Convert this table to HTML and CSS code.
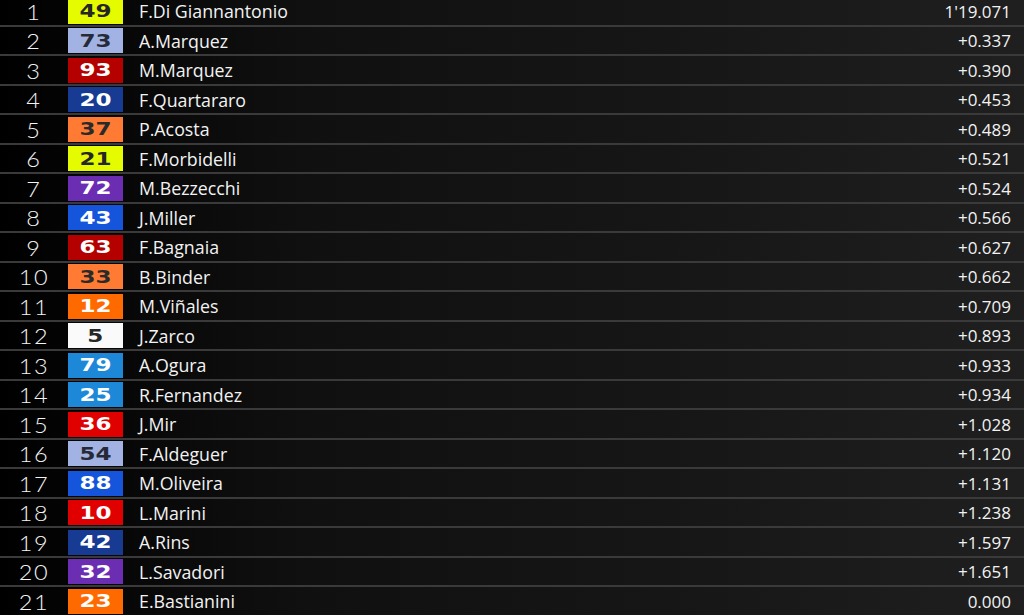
FILE: index.html
```html
<!DOCTYPE html>
<html lang="en">
<head>
<meta charset="utf-8">
<title>Classification</title>
<link rel="stylesheet" href="styles.css">
</head>
<body>
<div class="board">
  <div class="row"><span class="pos">1</span><span class="num c-lime"><b>49</b></span><span class="name">F.Di Giannantonio</span><span class="time">1'19.071</span></div>
  <div class="row"><span class="pos">2</span><span class="num c-lav"><b>73</b></span><span class="name">A.Marquez</span><span class="time">+0.337</span></div>
  <div class="row"><span class="pos">3</span><span class="num c-dred"><b>93</b></span><span class="name">M.Marquez</span><span class="time">+0.390</span></div>
  <div class="row"><span class="pos">4</span><span class="num c-navy"><b>20</b></span><span class="name">F.Quartararo</span><span class="time">+0.453</span></div>
  <div class="row"><span class="pos">5</span><span class="num c-orange"><b>37</b></span><span class="name">P.Acosta</span><span class="time">+0.489</span></div>
  <div class="row"><span class="pos">6</span><span class="num c-lime"><b>21</b></span><span class="name">F.Morbidelli</span><span class="time">+0.521</span></div>
  <div class="row"><span class="pos">7</span><span class="num c-purple"><b>72</b></span><span class="name">M.Bezzecchi</span><span class="time">+0.524</span></div>
  <div class="row"><span class="pos">8</span><span class="num c-blue"><b>43</b></span><span class="name">J.Miller</span><span class="time">+0.566</span></div>
  <div class="row"><span class="pos">9</span><span class="num c-dred"><b>63</b></span><span class="name">F.Bagnaia</span><span class="time">+0.627</span></div>
  <div class="row"><span class="pos">10</span><span class="num c-orange"><b>33</b></span><span class="name">B.Binder</span><span class="time">+0.662</span></div>
  <div class="row"><span class="pos">11</span><span class="num c-ktm"><b>12</b></span><span class="name">M.Viñales</span><span class="time">+0.709</span></div>
  <div class="row"><span class="pos">12</span><span class="num c-white"><b>5</b></span><span class="name">J.Zarco</span><span class="time">+0.893</span></div>
  <div class="row"><span class="pos">13</span><span class="num c-sky"><b>79</b></span><span class="name">A.Ogura</span><span class="time">+0.933</span></div>
  <div class="row"><span class="pos">14</span><span class="num c-sky"><b>25</b></span><span class="name">R.Fernandez</span><span class="time">+0.934</span></div>
  <div class="row"><span class="pos">15</span><span class="num c-red"><b>36</b></span><span class="name">J.Mir</span><span class="time">+1.028</span></div>
  <div class="row"><span class="pos">16</span><span class="num c-lav"><b>54</b></span><span class="name">F.Aldeguer</span><span class="time">+1.120</span></div>
  <div class="row"><span class="pos">17</span><span class="num c-blue"><b>88</b></span><span class="name">M.Oliveira</span><span class="time">+1.131</span></div>
  <div class="row"><span class="pos">18</span><span class="num c-red"><b>10</b></span><span class="name">L.Marini</span><span class="time">+1.238</span></div>
  <div class="row"><span class="pos">19</span><span class="num c-navy"><b>42</b></span><span class="name">A.Rins</span><span class="time">+1.597</span></div>
  <div class="row"><span class="pos">20</span><span class="num c-purple"><b>32</b></span><span class="name">L.Savadori</span><span class="time">+1.651</span></div>
  <div class="row"><span class="pos">21</span><span class="num c-ktm"><b>23</b></span><span class="name">E.Bastianini</span><span class="time">0.000</span></div>
</div>
</body>
</html>
```

FILE: styles.css
```css
html, body {
  margin: 0;
  padding: 0;
  height: 100%;
  overflow: hidden;
}

body {
  background: linear-gradient(90deg, #000 0%, #050505 8%, #101010 30%, #161616 65%, #1f1f1f 100%);
  color: #f2f2f2;
  font-family: "Open Sans", "Liberation Sans", sans-serif;
}

.board {
  display: flex;
  flex-direction: column;
  margin-top: -3px;
}

.row {
  display: grid;
  grid-template-columns: 68px 55px 1fr auto;
  align-items: center;
  height: 29.5px;
  box-sizing: border-box;
  border-bottom: 2px solid #3a3a3a;
  padding-right: 13px;
  padding-top: 1px;
}

.pos {
  text-align: center;
  font-family: "Lato", "DejaVu Sans", sans-serif;
  font-weight: 300;
  font-size: 21px;
  color: #f4f4f4;
  letter-spacing: 1.5px;
  transform: scaleX(1.12);
}

.num {
  height: 25px;
  display: flex;
  align-items: center;
  justify-content: center;
  color: #fff;
}

.num b {
  display: block;
  font-family: "DejaVu Sans", "Liberation Sans", sans-serif;
  font-weight: bold;
  font-size: 18px;
  line-height: 1;
  letter-spacing: 0;
  transform: scaleX(1.28);
}

.name {
  padding-left: 16px;
  font-size: 17.8px;
  font-weight: 500;
  color: #f2f2f2;
  white-space: nowrap;
}

.time {
  text-align: right;
  font-size: 17px;
  font-weight: 500;
  color: #f2f2f2;
}

.c-lime   { background: #e4fb00; color: #262626; }
.c-lav    { background: #a2b2e2; color: #262a38; }
.c-dred   { background: #b50000; }
.c-navy   { background: #173a93; }
.c-orange { background: #ff7b33; color: #2a2a2a; }
.c-purple { background: #6b2eb3; }
.c-blue   { background: #1555dc; }
.c-ktm    { background: #ff6a00; }
.c-white  { background: #fafafa; color: #262626; }
.c-sky    { background: #1d88d8; }
.c-red    { background: #e10000; }
```
